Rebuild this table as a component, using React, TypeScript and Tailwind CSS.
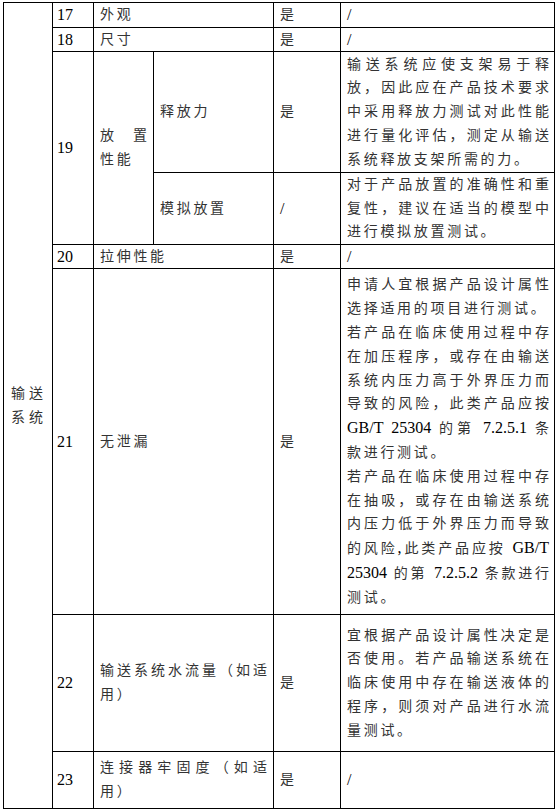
import React from 'react';

type Ln = { t: string; j?: boolean };

const LATIN = /([A-Za-z0-9./, ]+)/;

// latin runs (numbers, GB/T) are set a bit larger, like Times next to SimSun
const Txt = ({ t }: { t: string }) => (
    <>
        {t.split(LATIN).filter(Boolean).map((s, i) =>
            LATIN.test(s) ? (
                <span key={i} className="text-[16px] tracking-normal text-black">{s}</span>
            ) : (
                <React.Fragment key={i}>{s}</React.Fragment>
            )
        )}
    </>
);

const Lines = ({ lines }: { lines: Ln[] }) => (
    <>
        {lines.map((l, i) => (
            <div
                key={i}
                className={l.j ? 'text-justify [text-align-last:justify] tracking-normal' : 'whitespace-nowrap tracking-[2.7px]'}
            >
                <Txt t={l.t} />
            </div>
        ))}
    </>
);

const base = 'flex flex-col justify-center border-r border-b border-black leading-[23.8px]';

const App = () => {
    return (
        <div className="min-h-[812px] w-[558px] bg-white pt-[2px] pl-[3px] font-['Liberation_Serif','Noto_Sans_CJK_SC',serif] text-[14px] text-[#333]">
            <div className="grid w-[552px] grid-cols-[49px_41px_60px_120px_67px_214px] grid-rows-[25px_24px_121px_72px_24px_346px_137px_57px] border-l border-t border-black">
                {/* group */}
                <div className={`${base} col-start-1 row-start-1 row-span-8 pl-[7px] tracking-[4px]`}>
                    <div>输送</div>
                    <div>系统</div>
                </div>

                {/* 17 */}
                <div className={`${base} col-start-2 row-start-1 pl-[4px] text-[16px] text-black`}>17</div>
                <div className={`${base} col-start-3 col-span-2 row-start-1 pl-[6px] tracking-[2.7px]`}>外观</div>
                <div className={`${base} col-start-5 row-start-1 pl-[6px]`}>是</div>
                <div className={`${base} col-start-6 row-start-1 pl-[6px]`}><Txt t="/" /></div>

                {/* 18 */}
                <div className={`${base} col-start-2 row-start-2 pl-[4px] text-[16px] text-black`}>18</div>
                <div className={`${base} col-start-3 col-span-2 row-start-2 pl-[6px] tracking-[2.7px]`}>尺寸</div>
                <div className={`${base} col-start-5 row-start-2 pl-[6px]`}>是</div>
                <div className={`${base} col-start-6 row-start-2 pl-[6px]`}><Txt t="/" /></div>

                {/* 19 */}
                <div className={`${base} col-start-2 row-start-3 row-span-2 pl-[4px] text-[16px] text-black`}>19</div>
                <div className={`${base} col-start-3 row-start-3 row-span-2 px-[6px]`}>
                    <Lines lines={[{ t: '放置', j: true }, { t: '性能' }]} />
                </div>
                <div className={`${base} col-start-4 row-start-3 pl-[6px] tracking-[2.7px]`}>释放力</div>
                <div className={`${base} col-start-5 row-start-3 pl-[6px]`}>是</div>
                <div className={`${base} col-start-6 row-start-3 pl-[6px] pr-[5px]`}>
                    <Lines
                        lines={[
                            { t: '输送系统应使支架易于释', j: true },
                            { t: '放，因此应在产品技术要求', j: true },
                            { t: '中采用释放力测试对此性能', j: true },
                            { t: '进行量化评估，测定从输送', j: true },
                            { t: '系统释放支架所需的力。' },
                        ]}
                    />
                </div>
                <div className={`${base} col-start-4 row-start-4 pl-[6px] tracking-[2.7px]`}>模拟放置</div>
                <div className={`${base} col-start-5 row-start-4 pl-[6px]`}><Txt t="/" /></div>
                <div className={`${base} col-start-6 row-start-4 pl-[6px] pr-[5px]`}>
                    <Lines
                        lines={[
                            { t: '对于产品放置的准确性和重', j: true },
                            { t: '复性，建议在适当的模型中', j: true },
                            { t: '进行模拟放置测试。' },
                        ]}
                    />
                </div>

                {/* 20 */}
                <div className={`${base} col-start-2 row-start-5 pl-[4px] text-[16px] text-black`}>20</div>
                <div className={`${base} col-start-3 col-span-2 row-start-5 pl-[6px] tracking-[2.7px]`}>拉伸性能</div>
                <div className={`${base} col-start-5 row-start-5 pl-[6px]`}>是</div>
                <div className={`${base} col-start-6 row-start-5 pl-[6px]`}><Txt t="/" /></div>

                {/* 21 */}
                <div className={`${base} col-start-2 row-start-6 pl-[4px] text-[16px] text-black`}>21</div>
                <div className={`${base} col-start-3 col-span-2 row-start-6 pl-[6px] tracking-[2.7px]`}>无泄漏</div>
                <div className={`${base} col-start-5 row-start-6 pl-[6px]`}>是</div>
                <div className={`${base} col-start-6 row-start-6 pl-[6px] pr-[5px]`}>
                    <Lines
                        lines={[
                            { t: '申请人宜根据产品设计属性', j: true },
                            { t: '选择适用的项目进行测试。' },
                            { t: '若产品在临床使用过程中存', j: true },
                            { t: '在加压程序，或存在由输送', j: true },
                            { t: '系统内压力高于外界压力而', j: true },
                            { t: '导致的风险，此类产品应按', j: true },
                            { t: 'GB/T 25304 的第 7.2.5.1 条', j: true },
                            { t: '款进行测试。' },
                            { t: '若产品在临床使用过程中存', j: true },
                            { t: '在抽吸，或存在由输送系统', j: true },
                            { t: '内压力低于外界压力而导致', j: true },
                            { t: '的风险,此类产品应按 GB/T', j: true },
                            { t: '25304 的第 7.2.5.2 条款进行', j: true },
                            { t: '测试。' },
                        ]}
                    />
                </div>

                {/* 22 */}
                <div className={`${base} col-start-2 row-start-7 pl-[4px] text-[16px] text-black`}>22</div>
                <div className={`${base} col-start-3 col-span-2 row-start-7 pl-[6px] pr-[6px]`}>
                    <Lines lines={[{ t: '输送系统水流量（如适', j: true }, { t: '用）' }]} />
                </div>
                <div className={`${base} col-start-5 row-start-7 pl-[6px]`}>是</div>
                <div className={`${base} col-start-6 row-start-7 pl-[6px] pr-[5px]`}>
                    <Lines
                        lines={[
                            { t: '宜根据产品设计属性决定是', j: true },
                            { t: '否使用。若产品输送系统在', j: true },
                            { t: '临床使用中存在输送液体的', j: true },
                            { t: '程序，则须对产品进行水流', j: true },
                            { t: '量测试。' },
                        ]}
                    />
                </div>

                {/* 23 */}
                <div className={`${base} col-start-2 row-start-8 pl-[4px] text-[16px] text-black`}>23</div>
                <div className={`${base} col-start-3 col-span-2 row-start-8 pl-[6px] pr-[6px]`}>
                    <Lines lines={[{ t: '连接器牢固度（如适', j: true }, { t: '用）' }]} />
                </div>
                <div className={`${base} col-start-5 row-start-8 pl-[6px]`}>是</div>
                <div className={`${base} col-start-6 row-start-8 pl-[6px]`}><Txt t="/" /></div>
            </div>
        </div>
    );
};

export default App;
